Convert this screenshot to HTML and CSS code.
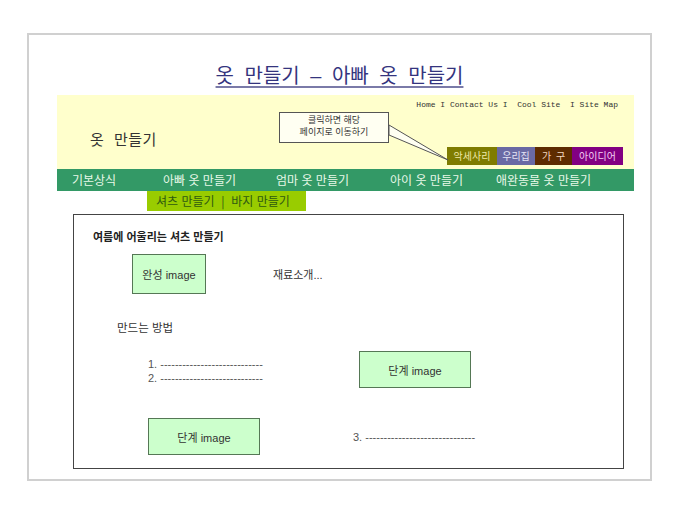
FILE: index.html
```html
<!DOCTYPE html>
<html lang="ko">
<head>
    <meta charset="UTF-8">
    <meta name="viewport" content="width=device-width, initial-scale=1.0">
    <title>옷 만들기 - 아빠 옷 만들기</title>
    <link rel="stylesheet" href="styles.css">
</head>
<body>
    <div class="frame">
        <h1 class="page-title"><a href="#">옷 만들기 – 아빠 옷 만들기</a></h1>

        <div class="site">
            <!-- 상단 헤더 -->
            <div class="header">
                <div class="logo">옷 만들기</div>
                <div class="header-right">
                    <div class="top-links">Home I Contact Us I  Cool Site  I Site Map</div>
                    <div class="cats">
                        <a href="#" class="cat cat-acc">악세사리</a>
                        <a href="#" class="cat cat-home">우리집</a>
                        <a href="#" class="cat cat-furn">가 구</a>
                        <a href="#" class="cat cat-idea">아이디어</a>
                    </div>
                </div>

                <!-- 말풍선 -->
                <svg class="callout-tail" width="80" height="60" viewBox="0 0 80 60">
                    <polygon points="1,12 60,47 1,22" fill="#fffff2" stroke="#555" stroke-width="1"/>
                </svg>
                <div class="callout">클릭하면 해당<br>페이지로 이동하기</div>
            </div>

            <!-- 메뉴 -->
            <div class="nav">
                <a href="#">기본상식</a>
                <a href="#">아빠 옷 만들기</a>
                <a href="#">엄마 옷 만들기</a>
                <a href="#">아이 옷 만들기</a>
                <a href="#">애완동물 옷 만들기</a>
            </div>
            <div class="subnav">셔츠 만들기 &nbsp;|&nbsp; 바지 만들기</div>

            <!-- 본문 -->
            <div class="content">
                <h2 class="content-title">여름에 어울리는 셔츠 만들기</h2>

                <div class="intro">
                    <div class="img-box img-done">완성 image</div>
                    <p class="materials">재료소개...</p>
                </div>

                <p class="how-to">만드는 방법</p>

                <div class="steps">
                    <div class="step-text">
                        1. ----------------------------<br>
                        2. ----------------------------
                    </div>
                    <div class="img-box img-step">단계 image</div>
                    <div class="img-box img-step">단계 image</div>
                    <div class="step-text step-three">3. ------------------------------</div>
                </div>
            </div>
        </div>
    </div>
</body>
</html>
```

FILE: styles.css
```css
body {
    margin: 0;
    background-color: #fff;
    font-family: "Liberation Sans", "Noto Sans CJK KR", sans-serif;
    color: #333;
}
.frame {
    margin: 33px 0 0 27px;
    width: 621px;
    height: 444px;
    border: 2px solid #d0d0d0;
}
.page-title {
    margin: 29px 0 7px;
    text-align: center;
    font-size: 20px;
    font-weight: normal;
    line-height: 24px;
    word-spacing: 5px;
}
.page-title a {
    color: #34347e;
    text-decoration: underline;
    text-underline-offset: 3px;
    text-decoration-color: #7a7aa8;
}
.site {
    margin-left: 28px;
    width: 577px;
}
.header {
    position: relative;
    display: flex;
    justify-content: space-between;
    height: 74px;
    background-color: #ffffcc;
}
.logo {
    padding: 35px 0 0 33px;
    font-size: 15px;
    line-height: 18px;
    color: #333;
    font-family: "Noto Sans CJK KR", sans-serif;
    word-spacing: 5px;
    letter-spacing: 0.5px;
}
.header-right {
    display: flex;
    flex-direction: column;
    align-items: flex-end;
    justify-content: space-between;
    padding: 5px 11px 4px 0;
}
.top-links {
    margin-right: 5px;
    font-family: "Liberation Mono", "DejaVu Sans Mono", monospace;
    font-size: 8px;
    line-height: 10px;
    white-space: pre;
    color: #333;
}
.cats {
    display: flex;
}
.cat {
    height: 18px;
    line-height: 18px;
    font-size: 10px;
    font-family: "Noto Sans CJK KR", sans-serif;
    text-decoration: none;
    text-align: center;
    white-space: nowrap;
}
.cat-acc {
    width: 50px;
    background-color: #7f7c00;
    color: #f0e8a8;
}
.cat-home {
    width: 38px;
    background-color: #6a6aa4;
    color: #e4e4f4;
}
.cat-furn {
    width: 37px;
    background-color: #5e2c00;
    color: #f4d8c0;
    word-spacing: 2px;
}
.cat-idea {
    width: 51px;
    background-color: #820082;
    color: #f4d0f4;
}
.callout {
    position: absolute;
    left: 222px;
    top: 17px;
    width: 108px;
    height: 28px;
    padding-top: 1px;
    border: 1px solid #555;
    background-color: #fffff2;
    font-family: "Noto Sans CJK KR", sans-serif;
    font-size: 9px;
    line-height: 12px;
    text-align: center;
    color: #333;
}
.callout-tail {
    position: absolute;
    left: 331px;
    top: 18px;
    pointer-events: none;
}
.nav {
    display: grid;
    grid-template-columns: 91px 113px 114px 106px auto;
    height: 22px;
    padding-left: 15px;
    background-color: #339966;
}
.nav a {
    line-height: 22px;
    font-size: 12px;
    font-family: "Noto Sans CJK KR", sans-serif;
    color: #e8f8e8;
    text-decoration: none;
    white-space: nowrap;
}
.subnav {
    margin-left: 90px;
    width: 150px;
    height: 20px;
    padding-left: 9px;
    line-height: 20px;
    background-color: #99cc00;
    font-size: 12px;
    font-family: "Noto Sans CJK KR", sans-serif;
    color: #2f5a10;
}
.content {
    margin: 3px 0 0 16px;
    width: 551px;
    height: 255px;
    padding: 14px 0 0 19px;
    box-sizing: border-box;
    border: 1px solid #444;
}
.content-title {
    margin: 0;
    font-size: 11px;
    line-height: 14px;
    font-weight: bold;
    font-family: "Noto Sans CJK KR", sans-serif;
    color: #222;
}
.intro {
    display: flex;
    align-items: center;
    margin: 11px 0 0 39px;
}
.materials {
    margin: 0 0 0 67px;
    font-size: 11px;
}
.how-to {
    margin: 27px 0 0 24px;
    font-size: 11.5px;
    line-height: 14px;
}
.img-box {
    display: flex;
    align-items: center;
    justify-content: center;
    border: 1px solid #557755;
    background-color: #ccffcc;
    font-size: 11px;
    color: #333;
}
.img-done {
    width: 72px;
    height: 38px;
}
.img-step {
    width: 110px;
    height: 35px;
}
.steps {
    display: grid;
    grid-template-columns: 211px auto;
    row-gap: 30px;
    margin: 16px 0 0 55px;
    justify-items: start;
}
.step-text {
    padding-top: 6px;
    font-size: 11px;
    line-height: 14px;
    color: #555;
}
.step-three {
    align-self: center;
    margin-left: -6px;
    padding-top: 0;
}
```
